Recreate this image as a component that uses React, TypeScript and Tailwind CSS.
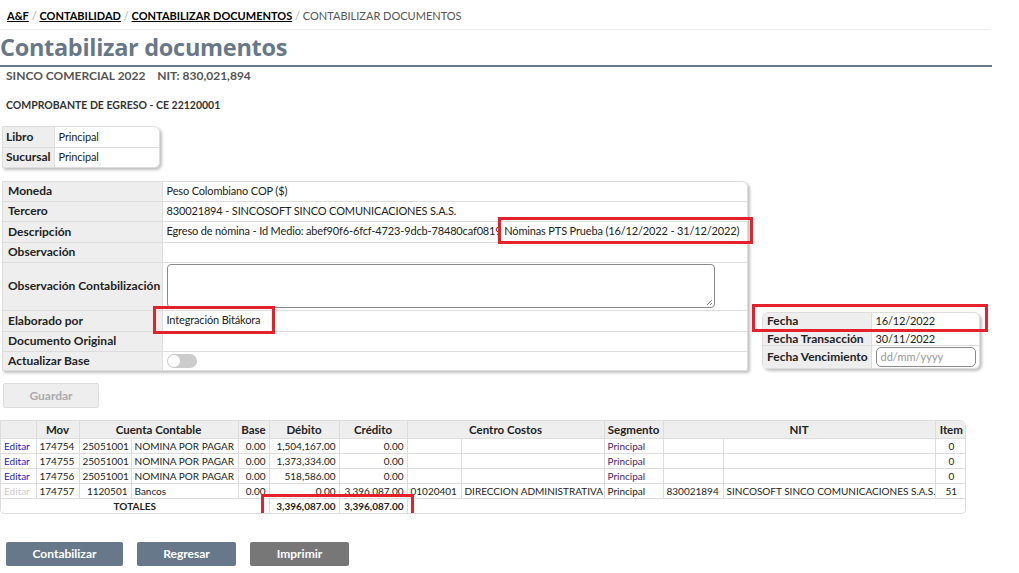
import React from "react";

const F = { fontFamily: "Lato, 'Open Sans', sans-serif" };

function RedBox({ className }: { className: string }) {
  return <div className={"absolute border-[3px] border-[#e5222b] pointer-events-none " + className} />;
}

const rows = [
  { ed: true, mov: "174754", cc: "25051001", cn: "NOMINA POR PAGAR", base: "0.00", deb: "1,504,167.00", cre: "0.00", cco: "", ccn: "", seg: "Principal", segP: true, nit: "", nitn: "", item: "0" },
  { ed: true, mov: "174755", cc: "25051001", cn: "NOMINA POR PAGAR", base: "0.00", deb: "1,373,334.00", cre: "0.00", cco: "", ccn: "", seg: "Principal", segP: true, nit: "", nitn: "", item: "0" },
  { ed: true, mov: "174756", cc: "25051001", cn: "NOMINA POR PAGAR", base: "0.00", deb: "518,586.00", cre: "0.00", cco: "", ccn: "", seg: "Principal", segP: true, nit: "", nitn: "", item: "0" },
  { ed: false, mov: "174757", cc: "1120501", cn: "Bancos", base: "0.00", deb: "0.00", cre: "3,396,087.00", cco: "01020401", ccn: "DIRECCION ADMINISTRATIVA", seg: "Principal", segP: false, nit: "830021894", nitn: "SINCOSOFT SINCO COMUNICACIONES S.A.S.", item: "51" },
];

export default function App() {
  const lbl = "bg-[#eeeeee] font-bold text-[#222] text-[12px] px-[5px] border-b border-r border-[#dddddd] whitespace-nowrap";
  const val = "px-[4px] text-[#222] text-[11px] tracking-[-0.15px] border-b border-[#dddddd]";
  const td = "border border-[#dddddd] px-[3px] h-[15px] leading-[14px] whitespace-nowrap overflow-hidden";
  const th = "border border-[#dddddd] border-t-0 h-[17px] leading-[15px]";
  return (
    <div className="w-[1019px] h-[573px] bg-white overflow-hidden text-[12px] text-[#222]" style={F}>
      {/* breadcrumb */}
      <div className="h-[30px] border-b border-[#eeeeee] w-[990px] pl-[7px] pt-[9px] text-[11px] leading-[14px] text-[#555]">
        <span className="underline font-bold text-black">A&amp;F</span>
        <span className="text-[#aaa]"> / </span>
        <span className="underline font-bold text-black">CONTABILIDAD</span>
        <span className="text-[#aaa]"> / </span>
        <span className="underline font-bold text-black">CONTABILIZAR DOCUMENTOS</span>
        <span className="text-[#aaa]"> / </span>
        <span className="text-[#555]">CONTABILIZAR DOCUMENTOS</span>
      </div>
      {/* heading */}
      <div className="w-[992px] border-b-2 border-[#687888] h-[37px] flex items-center">
        <h1 className="text-[23.5px] font-bold text-[#687888] leading-none tracking-[-0.3px]" style={{ fontFamily: "'Open Sans', sans-serif" }}>Contabilizar documentos</h1>
      </div>
      <div className="pl-[6px] pt-[1px] font-bold text-[12px] text-[#555] leading-[16px]">SINCO COMERCIAL 2022&nbsp;&nbsp;&nbsp;&nbsp;NIT: 830,021,894</div>
      <div className="pl-[6px] pt-[14px] font-bold text-[10.5px] text-[#333] leading-[14px]">COMPROBANTE DE EGRESO - CE 22120001</div>

      {/* libro */}
      <div className="ml-[2px] mt-[14px] w-[158px] border border-[#dddddd] rounded-r-[6px] shadow-[2px_2px_3px_rgba(0,0,0,0.25)] overflow-hidden">
        <table className="w-full border-collapse">
          <tbody>
            <tr className="h-[20px]"><td className={lbl + " w-[50px] !px-[3px]"}>Libro</td><td className={val}>Principal</td></tr>
            <tr className="h-[20px]"><td className={lbl + " !px-[3px] !border-b-0"}>Sucursal</td><td className={val + " !border-b-0"}>Principal</td></tr>
          </tbody>
        </table>
      </div>

      {/* main form + fecha */}
      <div className="flex items-end mt-[13px] ml-[2px]">
        <div className="w-[746px] border border-[#dddddd] rounded-tr-[6px] rounded-br-[3px] shadow-[2px_2px_3px_rgba(0,0,0,0.25)]">
          <table className="w-full border-collapse table-fixed">
            <colgroup><col className="w-[159px]" /><col /></colgroup>
            <tbody>
              <tr className="h-[19px]"><td className={lbl}>Moneda</td><td className={val}>Peso Colombiano COP ($)</td></tr>
              <tr className="h-[20px]"><td className={lbl}>Tercero</td><td className={val}>830021894 - SINCOSOFT SINCO COMUNICACIONES S.A.S.</td></tr>
              <tr className="h-[21px]"><td className={lbl}>Descripción</td>
                <td className={val + " whitespace-nowrap"}>Egreso de nómina - Id Medio: abef90f6-6fcf-4723-9dcb-78480caf0819<span className="relative">
                  <RedBox className="left-[-4px] right-[-14px] top-[-7px] bottom-[-7px]" /> Nóminas PTS Prueba (16/12/2022 - 31/12/2022)</span></td></tr>
              <tr className="h-[20px]"><td className={lbl}>Observación</td><td className={val}></td></tr>
              <tr className="h-[48px]"><td className={lbl}>Observación Contabilización</td>
                <td className={val + " py-[1px]"}><div className="w-[548px] h-[44px] border border-[#8a8a8a] rounded-[4px] relative">
                  <svg className="absolute right-[1px] bottom-[1px]" width="8" height="8" viewBox="0 0 8 8"><path d="M7 2 L2 7 M7 5 L5 7" stroke="#888" strokeWidth="1" /></svg>
                </div></td></tr>
              <tr className="h-[21px]"><td className={lbl}>Elaborado por</td><td className={val}><span className="relative">Integración Bitákora<RedBox className="left-[-14px] right-[-15px] top-[-7px] bottom-[-8px]" /></span></td></tr>
              <tr className="h-[20px]"><td className={lbl}>Documento Original</td><td className={val}></td></tr>
              <tr className="h-[19px]"><td className={lbl + " !border-b-0"}>Actualizar Base</td>
                <td className={val + " !border-b-0"}><div className="w-[30px] h-[14px] rounded-full bg-[#cccccc] relative"><div className="absolute left-[1px] top-[1px] w-[12px] h-[12px] rounded-full bg-white" /></div></td></tr>
            </tbody>
          </table>
        </div>
        <div className="ml-[14px] mb-[2px] w-[218px] border border-[#dddddd] rounded-[6px] shadow-[2px_2px_3px_rgba(0,0,0,0.25)] relative">
          <RedBox className="left-[-11px] right-[-9px] top-[-9px] h-[28px]" />
          <table className="w-full border-collapse table-fixed">
            <colgroup><col className="w-[108px]" /><col /></colgroup>
            <tbody>
              <tr className="h-[18px]"><td className={lbl + " !px-[4px] leading-[14px]"}>Fecha</td><td className={val + " leading-[14px]"}>16/12/2022</td></tr>
              <tr className="h-[15px]"><td className={lbl + " !px-[4px] leading-[13px]"}>Fecha Transacción</td><td className={val + " leading-[13px]"}>30/11/2022</td></tr>
              <tr className="h-[22px]"><td className={lbl + " !px-[4px] !border-b-0"}>Fecha Vencimiento</td>
                <td className="px-[4px] py-[1px]"><div className="w-[100px] h-[20px] border border-[#8a8a8a] rounded-[5px] px-[4px] text-[11px] text-[#999] leading-[18px]">dd/mm/yyyy</div></td></tr>
            </tbody>
          </table>
        </div>
      </div>

      {/* guardar */}
      <div className="ml-[3px] mt-[12px] w-[96px] h-[25px] bg-[#eeeeee] border border-[#dddddd] rounded-[2px] flex items-center justify-center text-[#aaaaaa] font-bold text-[12px]">Guardar</div>

      {/* grid */}
      <div className="mt-[12px] w-[966px] border border-[#dddddd] rounded-tr-[6px] rounded-b-[4px] overflow-hidden text-[10px]">
        <table className="w-full border-collapse table-fixed">
          <colgroup>
            <col className="w-[35px]" /><col className="w-[43px]" /><col className="w-[52px]" /><col className="w-[107px]" />
            <col className="w-[31px]" /><col className="w-[70px]" /><col className="w-[68px]" /><col className="w-[54px]" />
            <col className="w-[143px]" /><col className="w-[59px]" /><col className="w-[60px]" /><col className="w-[212px]" /><col className="w-[32px]" />
          </colgroup>
          <thead>
            <tr className="bg-[#eeeeee] font-bold text-[#222] text-[11.5px]">
              <th className={th + " border-l-0"}></th>
              <th className={th}>Mov</th>
              <th className={th} colSpan={2}>Cuenta Contable</th>
              <th className={th}>Base</th>
              <th className={th}>Débito</th>
              <th className={th}>Crédito</th>
              <th className={th} colSpan={2}>Centro Costos</th>
              <th className={th}>Segmento</th>
              <th className={th} colSpan={2}>NIT</th>
              <th className={th + " border-r-0"}>Item</th>
            </tr>
          </thead>
          <tbody>
            {rows.map((r) => (
              <tr key={r.mov}>
                <td className={td + " border-l-0 " + (r.ed ? "text-[#1a1acc]" : "text-[#cccccc]")}>Editar</td>
                <td className={td}>{r.mov}</td>
                <td className={td + " text-right"}>{r.cc}</td>
                <td className={td}>{r.cn}</td>
                <td className={td + " text-right"}>{r.base}</td>
                <td className={td + " text-right"}>{r.deb}</td>
                <td className={td + " text-right"}>{r.cre}</td>
                <td className={td}>{r.cco}</td>
                <td className={td}>{r.ccn}</td>
                <td className={td + (r.segP ? " text-[#4b1a6b]" : "")}>{r.seg}</td>
                <td className={td}>{r.nit}</td>
                <td className={td}>{r.nitn}</td>
                <td className={td + " text-center border-r-0"}>{r.item}</td>
              </tr>
            ))}
            <tr className="font-bold">
              <td className={td + " text-center border-l-0 border-b-0"} colSpan={5}>TOTALES</td>
              <td className={td + " text-right border-b-0 !overflow-visible relative"}>3,396,087.00<RedBox className="left-[-9px] top-[-5px] w-[153px] h-[24px]" /></td>
              <td className={td + " text-right border-b-0"}>3,396,087.00</td>
              <td className="border-t border-[#dddddd]" colSpan={6}></td>
            </tr>
          </tbody>
        </table>
      </div>

      {/* buttons */}
      <div className="flex gap-[14px] ml-[6px] mt-[28px]">
        <div className="w-[117px] h-[24px] bg-[#66788a] rounded-[2px] text-white font-bold text-[12px] flex items-center justify-center">Contabilizar</div>
        <div className="w-[99px] h-[24px] bg-[#66788a] rounded-[2px] text-white font-bold text-[12px] flex items-center justify-center">Regresar</div>
        <div className="w-[99px] h-[24px] bg-[#777777] rounded-[2px] text-white font-bold text-[12px] flex items-center justify-center">Imprimir</div>
      </div>
    </div>
  );
}
